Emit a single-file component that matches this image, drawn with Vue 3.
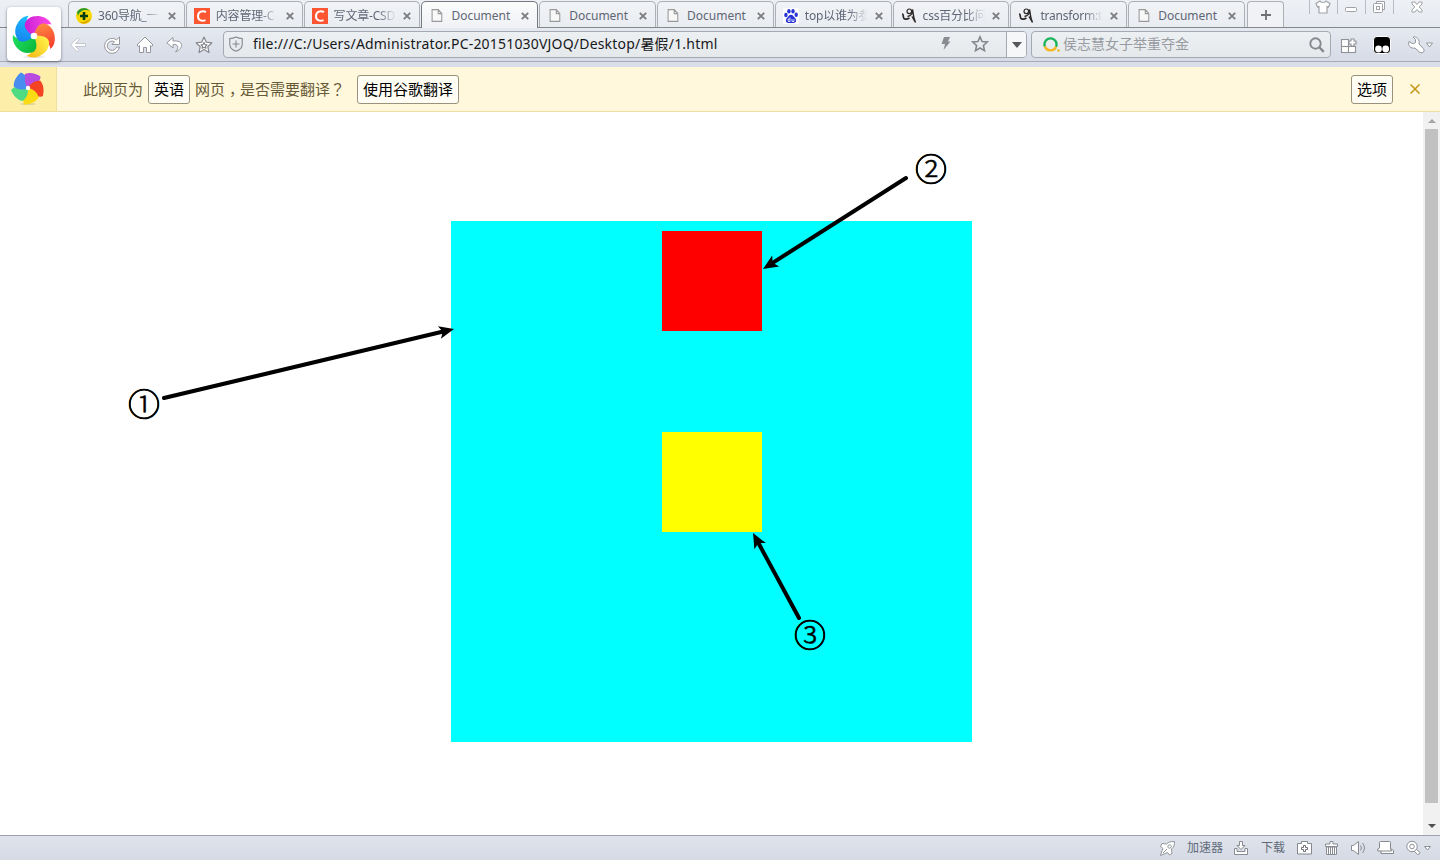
<template>
  <div class="browser">

    <!-- Tabs -->
    <div class="tab-bar">
      <div class="tabs">
        <div class="tab" v-for="(tab, i) in tabs" :key="i" :class="{ active: i === activeTab }" @click="activeTab = i">
          <svg class="favicon" width="16" height="16" viewBox="0 0 16 16">
            <g v-if="tab.icon === '360'">
              <circle cx="8" cy="8" r="8" fill="#f6d800"></circle>
              <path d="M1 4a8 8 0 0 1 13-1C10 1 4 2 2 8Z" fill="#2b9a2e"></path>
              <path d="M15 10a8 8 0 0 1-12 4c5 1 8-1 12-4Z" fill="#db9b00"></path>
              <path d="M8 4v8M4 8h8" stroke="#073e12" stroke-width="2.6"></path>
            </g>
            <g v-else-if="tab.icon === 'csdn'">
              <rect width="16" height="16" fill="#fc5531"></rect>
              <path d="M12 4.2C9 2.4 4 3.2 4 8.3c0 4.4 4.4 5.2 7.5 3.8" fill="none" stroke="#fff" stroke-width="2"></path>
            </g>
            <g v-else-if="tab.icon === 'baidu'">
              <rect width="16" height="16" rx="2" fill="#fff"></rect>
              <g fill="#2834d8">
                <ellipse cx="2.9" cy="7" rx="1.7" ry="2.2"></ellipse>
                <ellipse cx="5.9" cy="3.3" rx="1.7" ry="2.3"></ellipse>
                <ellipse cx="10" cy="3.3" rx="1.7" ry="2.3"></ellipse>
                <ellipse cx="13.2" cy="6.8" rx="1.7" ry="2.2"></ellipse>
                <path d="M8 6.800c2 0 2.800 2 4 3.200 2 1.800 1.200 5-1.300 5H5.300c-2.500 0-3.300-3.200-1.300-5C5.200 8.800 6 6.800 8 6.800Z"></path>
              </g>
              <path d="M7 9.500v4M7 11H5.200v2.500H7M9 11v2.500h2V11" fill="none" stroke="#fff" stroke-width=".8"></path>
            </g>
            <g v-else-if="tab.icon === 'blog'" fill="none" stroke="#2c2828">
              <path d="M1 6c1 0 1.300 1 1.300 2.500 0 3 3 3.500 6.200 1.500" stroke-width="1.700"></path>
              <circle cx="8.300" cy="3.300" r="2.300" stroke-width="1.200"></circle>
              <path d="M6.500 8.500C10 8 12 5 11.500 1.500c1 4 .5 8 3 13L11 8.500" stroke-width="1.400"></path>
            </g>
            <path v-else d="M2.500 2.500h7l4 4v8h-11ZM9.500 2.500v4h4" transform="translate(.9 -.8) scale(.88 .98)" fill="#f8f8f8" stroke="#999" stroke-width="1.200"></path>
          </svg>
          <span class="tab-title" :class="{ fade: tab.icon }">{{ tab.title }}</span>
          <svg class="tab-close" width="8" height="8" viewBox="0 0 8 8">
            <path d="M.8.8l6.400 6.400M7.200.8L.8 7.200" stroke="#7c7d80" stroke-width="1.900"></path>
          </svg>
        </div>
        <div class="new-tab">
          <svg width="10" height="10" viewBox="0 0 10 10">
            <path d="M5 0v10M0 5h10" stroke="#707175" stroke-width="1.800"></path>
          </svg>
        </div>
      </div>
      <div class="window-controls">
        <span class="control">
          <svg width="16" height="14" viewBox="0 0 16 14" fill="#fff" stroke="#a0a2a8" stroke-width="1.200">
            <path d="M5 1 1 3.500 2.500 7 4 6.500V13h8V6.500l1.500.5L15 3.500 11 1C10 3 6 3 5 1Z"></path>
          </svg>
        </span>
        <span class="control">
          <svg width="14" height="14" viewBox="0 0 14 14" fill="#fff" stroke="#a0a2a8">
            <rect x="1.500" y="7.500" width="11" height="4" rx="1"></rect>
          </svg>
        </span>
        <span class="control">
          <svg width="14" height="14" viewBox="0 0 14 14" fill="#fff" stroke="#a0a2a8">
            <path d="M4.500 3V1.500h8v8H11"></path>
            <rect x="1.500" y="3.500" width="9" height="9" rx="1"></rect>
            <rect x="4.500" y="6.500" width="3" height="3"></rect>
          </svg>
        </span>
        <span class="control wide">
          <svg width="12" height="12" viewBox="0 0 12 12" fill="#fff" stroke="#a0a2a8">
            <path d="M1 1h3l2 2.500L8 1h3v2L8.200 6 11 9v2H8L6 8.500 4 11H1V9l2.800-3L1 3Z"></path>
          </svg>
        </span>
      </div>
    </div>

    <!-- Toolbar -->
    <div class="toolbar">
      <div class="nav-buttons">
        <svg class="back" width="18" height="18" viewBox="0 0 18 18" fill="#fff" stroke="#c2c5cc" stroke-linejoin="round">
          <path d="M8.500 2 1.500 9l7 7 1.800-1.800L6.500 10.500h10v-3h-10l3.800-3.700Z"></path>
        </svg>
        <svg class="reload" width="18" height="18" viewBox="0 0 18 18" fill="#fff" stroke="#94969c" stroke-linejoin="round">
          <path d="M13.500 3.800A7.500 7.500 0 1 0 16.500 11h-3a4.700 4.700 0 1 1-2-5.200L9 8.500h7.500V1Z"></path>
        </svg>
        <svg class="home" width="18" height="18" viewBox="0 0 18 18" fill="#fff" stroke="#94969c" stroke-linejoin="round">
          <path d="M9 1 1 9l1.300 1.500L3.500 9.600v6.900h4v-5h3v5h4V9.600l1.200.9L17 9Z"></path>
        </svg>
        <svg class="undo" width="18" height="18" viewBox="0 0 18 18" fill="#fff" stroke="#94969c" stroke-linejoin="round">
          <path d="M7 1.500.8 6.800 7 12V8.500c5-.8 6.500 3 2.500 7.500 9-4 8-12-2.500-11Z"></path>
        </svg>
        <svg width="18" height="18" viewBox="0 0 18 18" fill="#fff" stroke="#85878d" stroke-width="1.200" stroke-linejoin="round">
          <path d="m9 1 2.300 5.200 5.700.6-4.200 3.900 1.200 5.800L9 13.600l-5 2.900 1.200-5.800L1 6.800l5.700-.6Z"></path>
          <path d="m9 6.500 1 2 2 .3-1.500 1.400.4 2.100L9 11.300l-1.900 1 .4-2.100L6 8.800l2-.3Z"></path>
        </svg>
      </div>
      <div class="address-bar">
        <svg class="shield" width="14" height="16" viewBox="0 0 14 16" fill="none" stroke="#84878d" stroke-width="1.100">
          <path d="M7 1Q4 2.500.8 2.500v6C.8 12 3.500 14 7 15.200 10.500 14 13.200 12 13.200 8.500v-6Q10 2.500 7 1Z"></path>
          <path d="M7 4.500v7M3.500 8h7"></path>
        </svg>
        <span class="url">{{ url }}</span>
        <svg class="bolt" width="10" height="14" viewBox="0 0 10 14">
          <path d="M3 0h6L7 4.500h2.500L2.500 13l1.500-6H.5Z" fill="#8a8c91"></path>
        </svg>
        <svg class="star" width="18" height="18" viewBox="0 0 18 18">
          <path d="m9 1.800 2.100 4.700 5.200.5-3.900 3.500 1.100 5.100L9 13l-4.500 2.600 1.100-5.100L1.700 7l5.200-.5Z" fill="none" stroke="#85878c" stroke-width="1.600"></path>
        </svg>
        <span class="dropdown"><i class="triangle"></i></span>
      </div>
      <div class="search-box">
        <svg width="18" height="16" viewBox="0 0 18 16" fill="none" stroke-width="2.400">
          <path d="M1.900 9.500A6 6 0 1 1 13 9.800" stroke="#1db45d"></path>
          <path d="M1.900 9.500A6 6 0 0 0 13 9.800" stroke="#f8b51e"></path>
          <circle cx="15.500" cy="13.500" r="1.300" fill="#f8b51e"></circle>
        </svg>
        <span class="search-text">侯志慧女子举重夺金</span>
        <svg class="magnifier" width="16" height="16" viewBox="0 0 16 16" fill="none" stroke="#85888d">
          <circle cx="6.500" cy="6.500" r="5.200" stroke-width="1.900"></circle>
          <path d="m10.500 10.500 4.300 4.300" stroke-width="2.400"></path>
        </svg>
      </div>
      <div class="extensions">
        <svg width="17" height="17" viewBox="0 0 17 17" fill="#fff" stroke="#919399" stroke-width="1.100">
          <rect x="1.500" y="2.500" width="7" height="7"></rect>
          <rect x="1.500" y="9.500" width="7" height="6"></rect>
          <rect x="8.500" y="9.500" width="7" height="6"></rect>
          <path d="M11 2h3v2h2v3h-2v2h-3V7H9V4h2Z"></path>
        </svg>
        <svg width="18" height="18" viewBox="0 0 18 18">
          <rect x=".5" y=".5" width="17" height="17" rx="3.500" fill="#000" stroke="#fff"></rect>
          <circle cx="5.500" cy="13" r="3.400" fill="#fff"></circle>
          <circle cx="12.700" cy="13" r="3.400" fill="#fff"></circle>
        </svg>
        <svg class="wrench" width="27" height="18" viewBox="0 0 27 18" fill="#fff" stroke="#94969c" stroke-linejoin="round">
          <path d="M6 1 8.500 3.500v3L6 8 2 5.500C.5 9.500 4 13 8 12l5 4.500q2.500 1 3.800-.8 1-2-.8-3.500L12 8C13 4 10 0 6 1Z"></path>
          <path d="M19.500 7h6L22.500 11Z"></path>
        </svg>
      </div>
    </div>

    <div class="logo">
      <svg width="44" height="46" viewBox="-22 -22 44 46">
        <defs>
          <linearGradient v-for="(pair, i) in petals" :id="'petal' + i" :key="i" x1="0" y1="0" x2="1" y2="0">
            <stop offset="0" :stop-color="pair[0]"></stop>
            <stop offset="1" :stop-color="pair[1]"></stop>
          </linearGradient>
          <clipPath id="overlap"><rect x="-12" y="-22" width="12" height="22"></rect></clipPath>
        </defs>
        <ellipse cx="0" cy="21" rx="11" ry="1" fill="#e8e8e8"></ellipse>
        <path v-for="(pair, i) in petals" :key="i" :d="bigPetal" :fill="`url(#petal${i})`" :transform="`rotate(${i * 72})`"></path>
        <path :d="bigPetal" fill="url(#petal0)" clip-path="url(#overlap)"></path>
        <circle r="3.300" fill="#fff"></circle>
      </svg>
    </div>

    <!-- Translation bar -->
    <div class="infobar">
      <div class="infobar-icon">
        <svg width="34" height="36" viewBox="-17 -17 34 36">
          <ellipse cx="0" cy="16" rx="8" ry="1" fill="#ded39b"></ellipse>
          <path v-for="(color, i) in smallPetals" :key="i" d="M0 0C-4-4-5-10-3-14 2-16 8-14.500 12.500-11.500 12.500-9 11.500-7 10-6 6-6 3-4 0 0Z" :fill="color" :transform="`rotate(${i * 72})`"></path>
          <circle r="2.200" fill="#fff"></circle>
        </svg>
      </div>
      <span class="info-text">此网页为</span>
      <button class="info-btn">英语</button>
      <span class="info-text">网页<span class="comma">，</span>是否需要翻译<span class="question">？</span></span>
      <button class="info-btn translate">使用谷歌翻译</button>
      <button class="info-btn options">选项</button>
      <svg class="info-close" width="10" height="10" viewBox="0 0 10 10">
        <path d="m.5.5 9 9M9.500.5l-9 9" stroke="#c5941a" stroke-width="1.500"></path>
      </svg>
    </div>

    <!-- Page -->
    <div class="viewport">
      <div class="page">
        <div class="parent">
          <div class="child red"></div>
          <div class="child yellow"></div>
        </div>
        <svg class="annotations" width="1423" height="723" viewBox="0 112 1423 723">
          <g v-for="note in notes" :key="note.label">
            <g :transform="arrowTransform(note)">
              <line :x1="-arrowLength(note)" y1="0" x2="-10" y2="0"></line>
              <path d="M0 0-15-6.500-11.500 0-15 6.500Z"></path>
            </g>
            <circle :cx="note.at[0]" :cy="note.at[1]" r="14.200"></circle>
            <text :x="note.at[0]" :y="note.at[1] + 12">{{ note.label }}</text>
          </g>
        </svg>
      </div>
      <div class="scrollbar">
        <i class="arrow up"></i>
        <div class="thumb"></div>
        <i class="arrow down"></i>
      </div>
    </div>

    <!-- Status bar -->
    <div class="status-bar">
      <svg class="rocket" width="17" height="17" viewBox="0 0 17 17" fill="#fff" stroke="#92959b" stroke-linejoin="round">
        <path d="M15.500 1.500c-4 0-6 .5-8 2.500L3 3.500 1.500 6.500l2.500 2L2.500 12l-1 3.500L5 14l3.500-1.500 2 2.500 2.500-1.500-.5-4.500c2.500-2 3-4 3-7.500Z"></path>
        <circle cx="10.500" cy="6.500" r="1.700"></circle>
        <path d="m4 13 4-4"></path>
      </svg>
      <span class="status-text accelerator">加速器</span>
      <svg class="download" width="16" height="16" viewBox="0 0 16 16" fill="#fff" stroke="#888b91" stroke-linejoin="round">
        <path d="M1.500 8.500v6h13v-6h-2.500v3H4v-3Z"></path>
        <path d="M6.500 1.500h3v4h2.500L8 9.500l-4-4h2.500Z"></path>
      </svg>
      <span class="status-text">下载</span>
      <div class="status-icons">
        <svg width="17" height="16" viewBox="0 0 17 16" fill="#fff" stroke="#84878e" stroke-linejoin="round">
          <path d="M5.500 3.500v-2h6v2h4v10.500h-14V3.500Z"></path>
          <path d="M7.500 5.500h2v2h2v2h-2v2h-2v-2h-2v-2h2Z" stroke="#6d7077"></path>
        </svg>
        <svg width="15" height="16" viewBox="0 0 15 16" fill="#fff" stroke="#888b91">
          <path d="M2.500 7h10v7.500h-10ZM4.500 7v7M6.500 7v7M8.500 7v7M10.500 7v7"></path>
          <path d="M6 4V1.500h3V4h4.500v2.500h-12V4Z"></path>
        </svg>
        <svg width="16" height="16" viewBox="0 0 16 16" fill="#fff" stroke="#888b91">
          <path d="M1.500 5.500h2L8.500 1.500v13l-5-4h-2Z"></path>
          <path d="M10.500 5.500q2 2.500 0 5M12.500 3q4 5 0 10" fill="none"></path>
        </svg>
        <svg width="17" height="16" viewBox="0 0 17 16" fill="#fff" stroke="#84878e" stroke-linejoin="round">
          <path d="M4 11v2.500h12.500v-3L14 9"></path>
          <path d="M3.500 1.500h9q1 0 1 1v5.500l1 3H.8v-2L2.500 8V2.500q0-1 1-1Z"></path>
        </svg>
        <svg width="27" height="16" viewBox="0 0 27 16" fill="#fff" stroke="#8c8f95">
          <path d="m10.500 8.500 4.500 4q-.5 2-2.500 2L8.500 10.500Z"></path>
          <circle cx="7" cy="6.500" r="5.200"></circle>
          <circle cx="7" cy="6.500" r="2.300"></circle>
          <path d="M19.500 6.500h6L22.500 10Z"></path>
        </svg>
      </div>
    </div>

  </div>
</template>

<script setup>
import { ref } from 'vue'

const activeTab = ref(3)
const url = 'file:///C:/Users/Administrator.PC-20151030VJOQ/Desktop/暑假/1.html'

const tabs = [
  { title: '360导航_一', icon: '360' },
  { title: '内容管理-C', icon: 'csdn' },
  { title: '写文章-CSD', icon: 'csdn' },
  { title: 'Document' },
  { title: 'Document' },
  { title: 'Document' },
  { title: 'top以谁为参', icon: 'baidu' },
  { title: 'css百分比问', icon: 'blog' },
  { title: 'transform:t', icon: 'blog' },
  { title: 'Document' }
]

const petals = [
  ['#c91fd6', '#ff4de6'],
  ['#ff8a42', '#f4382c'],
  ['#fff04a', '#f5b914'],
  ['#0bb83e', '#1ee060'],
  ['#1583f0', '#22c0ff']
]
const smallPetals = ['#b84be0', '#f44322', '#fbdc14', '#4edb83', '#498df0']
const bigPetal = 'M0 0C-7-4-11-9-8.500-14-5-19 1-21 7-19.500 12-18.500 16-15.500 17.500-11.500 12-13 5-10 3-2Z'

const notes = [
  { label: '①', from: [164, 398], to: [454, 329], at: [144, 404] },
  { label: '②', from: [906, 178], to: [763, 269], at: [931, 169] },
  { label: '③', from: [799, 618], to: [753, 533], at: [810, 635] }
]

function arrowLength({ from, to }) {
  return Math.hypot(to[0] - from[0], to[1] - from[1])
}

function arrowTransform({ from, to }) {
  const angle = Math.atan2(to[1] - from[1], to[0] - from[0]) * 180 / Math.PI
  return `translate(${to[0]} ${to[1]}) rotate(${angle})`
}
</script>

<style>
body {
  margin: 0;
  overflow: hidden;
}
</style>

<style scoped>
.browser {
  width: 1440px;
  height: 860px;
  display: flex;
  flex-direction: column;
  position: relative;
  overflow: hidden;
  background: white;
  font-family: "Noto Sans", "Noto Sans CJK SC", sans-serif;
}

.browser * {
  box-sizing: border-box;
}

svg {
  display: block;
  flex-shrink: 0;
}

/* Tabs */
.tab-bar {
  height: 28px;
  flex-shrink: 0;
  display: flex;
  justify-content: space-between;
  padding-left: 68px;
  background: linear-gradient(#edf0f4, #e6e9f0);
  border-bottom: 1px solid #85878d;
}

.tabs {
  display: flex;
  gap: 1px;
  padding-top: 1px;
}

.tab {
  width: 116.8px;
  height: 26px;
  display: flex;
  align-items: center;
  padding: 2px 8px 0 7px;
  border: 1px solid #adb0b6;
  border-bottom: none;
  border-radius: 5px 5px 0 0;
  background: linear-gradient(#f1f3f6, #e9ecf1);
}

.tab.active {
  height: 28px;
  padding-bottom: 2px;
  border-color: #787a7f;
  background: linear-gradient(#fcfcfd, #eff1f4);
}

.tab-title {
  width: 64px;
  margin-left: 6px;
  font-size: 12px;
  line-height: 18px;
  white-space: nowrap;
  color: #5f6675;
}

.tab-title.fade {
  letter-spacing: -0.2px;
  -webkit-mask-image: linear-gradient(90deg, #000 68%, transparent 98%);
  mask-image: linear-gradient(90deg, #000 68%, transparent 98%);
}

.tab-close {
  margin-left: auto;
}

.new-tab {
  width: 37px;
  height: 26px;
  margin-left: 1px;
  display: flex;
  align-items: center;
  justify-content: center;
  padding: 1px 0 0 1px;
  border: 1px solid #adb0b6;
  border-bottom: none;
  border-radius: 4px 4px 0 0;
  background: #f0f2f5;
}

.window-controls {
  display: flex;
  height: 14px;
}

.control {
  width: 28px;
  display: flex;
  align-items: center;
  justify-content: center;
  padding-right: 1px;
  border-left: 1px solid #b9bcc3;
}

.control.wide {
  width: 47px;
}

/* Toolbar */
.toolbar {
  height: 39px;
  flex-shrink: 0;
  display: flex;
  align-items: flex-start;
  padding-top: 3px;
  background: linear-gradient(#e5e9f0, #d7dbe7 33px, #a8abb4 33px, #a8abb4 34px, #d9deea 34px);
}

.nav-buttons {
  width: 223px;
  padding: 5px 0 0 69px;
  display: flex;
}

.back {
  margin-right: 16px;
}

.reload {
  margin-right: 15px;
}

.home {
  margin-right: 12px;
}

.undo {
  margin-right: 11px;
}

.address-bar {
  width: 804px;
  height: 27px;
  display: flex;
  align-items: center;
  padding-left: 5px;
  border: 1px solid #a6a9b1;
  border-radius: 4px;
  background: linear-gradient(#edf0f3, #e5e9ec);
}

.shield,
.bolt,
.star {
  margin-bottom: 1px;
}

.url {
  width: 688px;
  margin-left: 10px;
  padding-bottom: 3px;
  font-size: 14px;
  letter-spacing: 0.19px;
  white-space: nowrap;
  color: #17181a;
}

.star {
  margin-left: 20px;
}

.dropdown {
  width: 20px;
  height: 25px;
  margin-left: auto;
  display: flex;
  align-items: center;
  justify-content: center;
  border-left: 1px solid #a6a9b1;
  border-radius: 0 3px 3px 0;
  background: #f6f7f9;
}

.triangle {
  border: 5px solid transparent;
  border-top: 6px solid #55575b;
  border-bottom: none;
}

.search-box {
  width: 300px;
  height: 27px;
  margin-left: 4px;
  display: flex;
  align-items: center;
  padding: 0 5px 0 11px;
  border: 1px solid #a6a9b1;
  border-radius: 4px;
  background: linear-gradient(#edf0f3, #e5e9ec);
}

.search-text {
  margin-left: 2px;
  padding-bottom: 3px;
  font-size: 14px;
  color: #989ba1;
}

.magnifier {
  margin-left: auto;
}

.extensions {
  display: flex;
  align-items: center;
  gap: 16px;
  padding: 5px 0 0 9px;
}

/* Logo over both bars */
.logo {
  position: absolute;
  left: 7px;
  top: 7px;
  width: 54px;
  height: 54px;
  display: flex;
  align-items: center;
  justify-content: center;
  padding-top: 5px;
  border-radius: 4px;
  background: white;
  box-shadow: 0 1px 3px rgba(50, 55, 70, 0.6);
}

/* Translation bar */
.infobar {
  height: 45px;
  flex-shrink: 0;
  display: flex;
  align-items: center;
  border-bottom: 1px solid #eedf9f;
  background: #fff8dc;
}

.infobar-icon {
  width: 57px;
  height: 44px;
  display: flex;
  align-items: center;
  justify-content: center;
  margin-right: 26px;
  border-right: 1px solid #f1dfa0;
  background: #fdefaa;
}

.info-text {
  padding-bottom: 2px;
  font-size: 15px;
  color: #675b37;
}

/* half-width glyph, centred in a full-width cell */
.comma {
  padding: 0 3.5px 0 4px;
  font-family: "Noto Sans CJK SC", sans-serif;
  font-feature-settings: "halt";
}

.question {
  font-family: "Noto Sans CJK TC", sans-serif;
}

.info-btn {
  width: 42px;
  height: 29px;
  margin: 0 5px;
  padding: 0;
  border: 1px solid #99927c;
  border-radius: 3px;
  background: #fffdf4;
  font-family: inherit;
  font-size: 15px;
  line-height: 26px;
  color: #000;
  white-space: nowrap;
}

.info-btn.translate {
  width: 102px;
  margin-left: 12px;
}

.info-btn.options {
  margin-left: auto;
  margin-right: 17px;
}

.info-close {
  margin-right: 20px;
}

/* Page */
.viewport {
  height: 723px;
  flex-shrink: 0;
  display: flex;
}

.page {
  width: 1423px;
  position: relative;
  padding-top: 109px;
}

.parent {
  width: 521px;
  height: 521px;
  margin: 0 auto;
  padding: 10px 0 0 211px;
  display: flex;
  flex-direction: column;
  gap: 101px;
  background: aqua;
}

.child {
  width: 100px;
  height: 100px;
}

.red {
  background: red;
}

.yellow {
  background: yellow;
}

.annotations {
  position: absolute;
  inset: 0;
}

.annotations line {
  stroke: #000;
  stroke-width: 4;
  stroke-linecap: round;
}

.annotations circle {
  fill: none;
  stroke: #000;
  stroke-width: 1.6;
}

.annotations text {
  font-family: "Noto Sans CJK SC", sans-serif;
  font-size: 32px;
  font-weight: 300;
  text-anchor: middle;
  stroke: #000;
  stroke-width: 0.6;
}

.scrollbar {
  width: 17px;
  display: flex;
  flex-direction: column;
  align-items: center;
  background: #f1f1f1;
}

.thumb {
  width: 13px;
  height: 674px;
  margin: 6px 0 19px;
  background: #c1c1c1;
}

.arrow {
  border: 4px solid transparent;
}

.arrow.up {
  margin-top: 7px;
  border-top: none;
  border-bottom-color: #a3a3a3;
}

.arrow.down {
  margin-top: 2px;
  border-bottom: none;
  border-top-color: #505050;
}

/* Status bar */
.status-bar {
  height: 25px;
  flex-shrink: 0;
  display: flex;
  align-items: center;
  padding-left: 1159px;
  border-top: 1px solid #9da1ab;
  background: linear-gradient(#dfe3eb, #d5dae5);
}

.status-text {
  font-size: 12px;
  line-height: 20px;
  color: #626a7a;
}

.accelerator {
  margin-left: 11px;
}

.download {
  margin: 0 12px 0 10px;
}

.status-icons {
  display: flex;
  gap: 11px;
  margin-left: 11px;
}
</style>
